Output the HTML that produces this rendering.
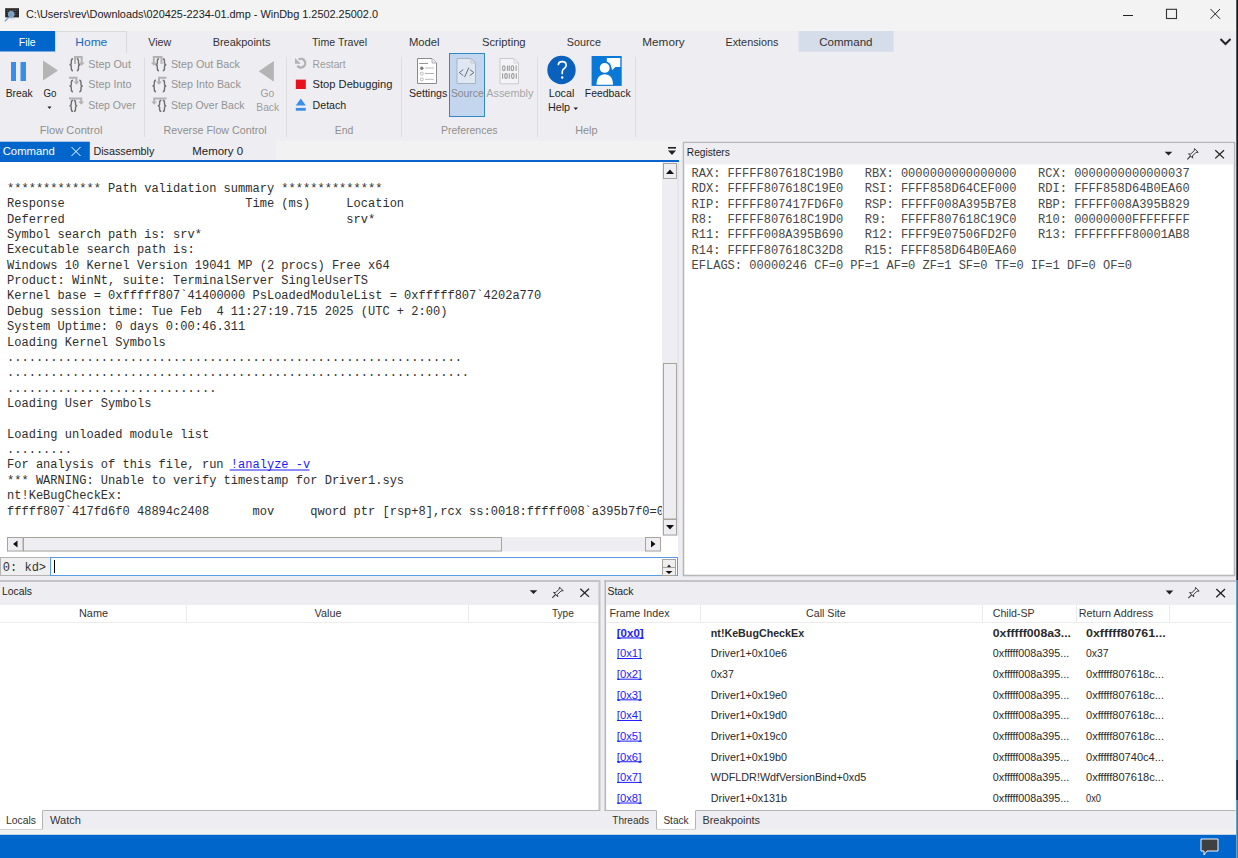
<!DOCTYPE html>
<html><head><meta charset="utf-8"><title>WinDbg</title>
<style>html,body{margin:0;padding:0;background:#eeeef2;overflow:hidden}svg{display:block}</style>
</head><body>
<svg width="1238" height="858" viewBox="0 0 1238 858">
<rect x="0" y="0" width="1238" height="858" fill="#eeeef2" />
<rect x="0" y="0" width="1238" height="31" fill="#f3f3f3" />
<rect x="5.2" y="8.2" width="13.8" height="9.2" fill="#262626" />
<line x1="7" y1="10.3" x2="17.5" y2="10.3" stroke="#8a8a8a" stroke-width="0.7" stroke-dasharray="1 0.6"/>
<line x1="7" y1="12.6" x2="17.5" y2="12.6" stroke="#6a6a6a" stroke-width="0.7" stroke-dasharray="1 0.6"/>
<line x1="12" y1="14.8" x2="17.5" y2="14.8" stroke="#6a6a6a" stroke-width="0.7" stroke-dasharray="1 0.6"/>
<circle cx="11.2" cy="14.3" r="3" fill="#9cc4ea" fill-opacity="0.75" stroke="#7fb0e0" stroke-width="0.8"/>
<line x1="9" y1="17.2" x2="4.8" y2="21.3" stroke="#7d9cc0" stroke-width="1.2" />
<line x1="9.5" y1="18.8" x2="15" y2="18.8" stroke="#c8d4e0" stroke-width="0.8" />
<text x="26" y="17.8" font-family="'Liberation Sans', sans-serif" font-size="11" fill="#1a1a1a" textLength="352" lengthAdjust="spacingAndGlyphs" >C:\Users\rev\Downloads\020425-2234-01.dmp - WinDbg 1.2502.25002.0</text>
<line x1="1123" y1="15.5" x2="1133" y2="15.5" stroke="#222" stroke-width="1" />
<rect x="1166.5" y="9.3" width="10" height="9.2" fill="none" stroke="#333" stroke-width="1.1" />
<line x1="1210.5" y1="9" x2="1220" y2="18.8" stroke="#222" stroke-width="1" />
<line x1="1220" y1="9" x2="1210.5" y2="18.8" stroke="#222" stroke-width="1" />
<rect x="0" y="31" width="55" height="20.5" fill="#0066cc" />
<text x="18.7" y="45.6" font-family="'Liberation Sans', sans-serif" font-size="11" fill="#ffffff" textLength="17" lengthAdjust="spacingAndGlyphs" >File</text>
<rect x="55.5" y="31.5" width="71" height="21" fill="#eeeef2" stroke="#dadade" stroke-width="1" />
<rect x="56" y="51" width="70" height="2" fill="#eeeef2" />
<text x="75.3" y="45.6" font-family="'Liberation Sans', sans-serif" font-size="11" fill="#1668c9" textLength="32" lengthAdjust="spacingAndGlyphs" >Home</text>
<text x="148.2" y="45.6" font-family="'Liberation Sans', sans-serif" font-size="11" fill="#333" textLength="23.100000000000023" lengthAdjust="spacingAndGlyphs" >View</text>
<text x="212.7" y="45.6" font-family="'Liberation Sans', sans-serif" font-size="11" fill="#333" textLength="57.69999999999999" lengthAdjust="spacingAndGlyphs" >Breakpoints</text>
<text x="312" y="45.6" font-family="'Liberation Sans', sans-serif" font-size="11" fill="#333" textLength="55" lengthAdjust="spacingAndGlyphs" >Time Travel</text>
<text x="408.9" y="45.6" font-family="'Liberation Sans', sans-serif" font-size="11" fill="#333" textLength="30.700000000000045" lengthAdjust="spacingAndGlyphs" >Model</text>
<text x="482" y="45.6" font-family="'Liberation Sans', sans-serif" font-size="11" fill="#333" textLength="43.60000000000002" lengthAdjust="spacingAndGlyphs" >Scripting</text>
<text x="566.8" y="45.6" font-family="'Liberation Sans', sans-serif" font-size="11" fill="#333" textLength="34.200000000000045" lengthAdjust="spacingAndGlyphs" >Source</text>
<text x="642.3" y="45.6" font-family="'Liberation Sans', sans-serif" font-size="11" fill="#333" textLength="42.40000000000009" lengthAdjust="spacingAndGlyphs" >Memory</text>
<text x="725.5" y="45.6" font-family="'Liberation Sans', sans-serif" font-size="11" fill="#333" textLength="52.89999999999998" lengthAdjust="spacingAndGlyphs" >Extensions</text>
<rect x="798.6" y="31" width="95" height="20.7" fill="#d5dcea" />
<text x="819.2" y="45.6" font-family="'Liberation Sans', sans-serif" font-size="11" fill="#333" textLength="53.3" lengthAdjust="spacingAndGlyphs" >Command</text>
<path d="M1220.5 39 L1225.5 44 L1230.5 39" fill="none" stroke="#222" stroke-width="2" />
<line x1="144.5" y1="57" x2="144.5" y2="137" stroke="#dddde2" stroke-width="1" />
<line x1="286.5" y1="57" x2="286.5" y2="137" stroke="#dddde2" stroke-width="1" />
<line x1="401.5" y1="57" x2="401.5" y2="137" stroke="#dddde2" stroke-width="1" />
<line x1="537.5" y1="57" x2="537.5" y2="137" stroke="#dddde2" stroke-width="1" />
<line x1="635.5" y1="57" x2="635.5" y2="137" stroke="#dddde2" stroke-width="1" />
<text x="39.7" y="133.6" font-family="'Liberation Sans', sans-serif" font-size="11" fill="#8e8e8e" textLength="62.7" lengthAdjust="spacingAndGlyphs" >Flow Control</text>
<text x="163.6" y="133.6" font-family="'Liberation Sans', sans-serif" font-size="11" fill="#8e8e8e" textLength="103.00000000000003" lengthAdjust="spacingAndGlyphs" >Reverse Flow Control</text>
<text x="334.8" y="133.6" font-family="'Liberation Sans', sans-serif" font-size="11" fill="#8e8e8e" textLength="18.5" lengthAdjust="spacingAndGlyphs" >End</text>
<text x="440.9" y="133.6" font-family="'Liberation Sans', sans-serif" font-size="11" fill="#8e8e8e" textLength="56.60000000000002" lengthAdjust="spacingAndGlyphs" >Preferences</text>
<text x="575.2" y="133.6" font-family="'Liberation Sans', sans-serif" font-size="11" fill="#8e8e8e" textLength="22.399999999999977" lengthAdjust="spacingAndGlyphs" >Help</text>
<rect x="11" y="62" width="5" height="19" fill="#3a8ee6" />
<rect x="20.5" y="62" width="5.5" height="19" fill="#3a8ee6" />
<text x="5.7" y="97.3" font-family="'Liberation Sans', sans-serif" font-size="11" fill="#1e1e1e" textLength="27" lengthAdjust="spacingAndGlyphs" >Break</text>
<path d="M43 60.5 L58 70.5 L43 80.5 Z" fill="#b4b4b4" />
<text x="43.4" y="97.3" font-family="'Liberation Sans', sans-serif" font-size="11" fill="#1e1e1e" textLength="13" lengthAdjust="spacingAndGlyphs" >Go</text>
<path d="M47.5 106.5 L51.5 106.5 L49.5 109 Z" fill="#222" />
<text x="88.2" y="67.6" font-family="'Liberation Sans', sans-serif" font-size="11" fill="#939393" textLength="42.7" lengthAdjust="spacingAndGlyphs" >Step Out</text>
<text x="88.2" y="87.6" font-family="'Liberation Sans', sans-serif" font-size="11" fill="#939393" textLength="43.3" lengthAdjust="spacingAndGlyphs" >Step Into</text>
<text x="88.2" y="108.6" font-family="'Liberation Sans', sans-serif" font-size="11" fill="#939393" textLength="47.499999999999986" lengthAdjust="spacingAndGlyphs" >Step Over</text>
<text x="170.9" y="67.6" font-family="'Liberation Sans', sans-serif" font-size="11" fill="#939393" textLength="69.1" lengthAdjust="spacingAndGlyphs" >Step Out Back</text>
<text x="170.9" y="87.6" font-family="'Liberation Sans', sans-serif" font-size="11" fill="#939393" textLength="69.9" lengthAdjust="spacingAndGlyphs" >Step Into Back</text>
<text x="170.9" y="108.6" font-family="'Liberation Sans', sans-serif" font-size="11" fill="#939393" textLength="73.5" lengthAdjust="spacingAndGlyphs" >Step Over Back</text>
<path d="M73.0 58.8 C71.3 58.8 71.3 59.8 71.3 61.3 L71.3 63.0 C71.3 64.3 70.5 64.8 69.5 64.8 C70.5 64.8 71.3 65.3 71.3 66.6 L71.3 68.3 C71.3 69.8 71.3 70.8 73.0 70.8" fill="none" stroke="#707070" stroke-width="1.4" />
<path d="M76.8 58.8 C78.5 58.8 78.5 59.8 78.5 61.3 L78.5 63.0 C78.5 64.3 79.3 64.8 80.3 64.8 C79.3 64.8 78.5 65.3 78.5 66.6 L78.5 68.3 C78.5 69.8 78.5 70.8 76.8 70.8" fill="none" stroke="#707070" stroke-width="1.4" />
<path d="M75 64 L75 57 L81.7 57 L81.7 63" fill="none" stroke="#b2b2b2" stroke-width="2" />
<path d="M78.7 62.5 L84.7 62.5 L81.7 65.7 Z" fill="#b2b2b2" />
<path d="M73.0 80.2 C71.3 80.2 71.3 81.2 71.3 82.7 L71.3 84.2 C71.3 85.5 70.5 86.0 69.5 86.0 C70.5 86.0 71.3 86.5 71.3 87.8 L71.3 89.3 C71.3 90.8 71.3 91.8 73.0 91.8" fill="none" stroke="#707070" stroke-width="1.4" />
<path d="M79.3 80.2 C81.0 80.2 81.0 81.2 81.0 82.7 L81.0 84.2 C81.0 85.5 81.8 86.0 82.8 86.0 C81.8 86.0 81.0 86.5 81.0 87.8 L81.0 89.3 C81.0 90.8 81.0 91.8 79.3 91.8" fill="none" stroke="#707070" stroke-width="1.4" />
<path d="M69 77.8 L76.5 77.8 L76.5 82" fill="none" stroke="#b2b2b2" stroke-width="2" />
<path d="M73.5 81.5 L79.5 81.5 L76.5 84.7 Z" fill="#b2b2b2" />
<path d="M73.0 100.3 C71.3 100.3 71.3 101.3 71.3 102.8 L71.3 104.05 C71.3 105.35 70.5 105.85 69.5 105.85 C70.5 105.85 71.3 106.35 71.3 107.64999999999999 L71.3 108.9 C71.3 110.4 71.3 111.4 73.0 111.4" fill="none" stroke="#707070" stroke-width="1.4" />
<path d="M73.8 100.3 C75.5 100.3 75.5 101.3 75.5 102.8 L75.5 104.05 C75.5 105.35 76.3 105.85 77.3 105.85 C76.3 105.85 75.5 106.35 75.5 107.64999999999999 L75.5 108.9 C75.5 110.4 75.5 111.4 73.8 111.4" fill="none" stroke="#707070" stroke-width="1.4" />
<path d="M69 98.4 L81.2 98.4 L81.2 102" fill="none" stroke="#b2b2b2" stroke-width="2" />
<path d="M78.2 101.5 L84.2 101.5 L81.2 104.7 Z" fill="#b2b2b2" />
<path d="M159.0 58.8 C157.3 58.8 157.3 59.8 157.3 61.3 L157.3 63.0 C157.3 64.3 156.5 64.8 155.5 64.8 C156.5 64.8 157.3 65.3 157.3 66.6 L157.3 68.3 C157.3 69.8 157.3 70.8 159.0 70.8" fill="none" stroke="#707070" stroke-width="1.4" />
<path d="M162.8 58.8 C164.5 58.8 164.5 59.8 164.5 61.3 L164.5 63.0 C164.5 64.3 165.3 64.8 166.3 64.8 C165.3 64.8 164.5 65.3 164.5 66.6 L164.5 68.3 C164.5 69.8 164.5 70.8 162.8 70.8" fill="none" stroke="#707070" stroke-width="1.4" />
<path d="M161.5 64 L161.5 57 L153.8 57 L153.8 63" fill="none" stroke="#b2b2b2" stroke-width="2" />
<path d="M150.8 62.5 L156.8 62.5 L153.8 65.7 Z" fill="#b2b2b2" />
<path d="M156.0 80.2 C154.3 80.2 154.3 81.2 154.3 82.7 L154.3 84.2 C154.3 85.5 153.5 86.0 152.5 86.0 C153.5 86.0 154.3 86.5 154.3 87.8 L154.3 89.3 C154.3 90.8 154.3 91.8 156.0 91.8" fill="none" stroke="#707070" stroke-width="1.4" />
<path d="M162.8 80.2 C164.5 80.2 164.5 81.2 164.5 82.7 L164.5 84.2 C164.5 85.5 165.3 86.0 166.3 86.0 C165.3 86.0 164.5 86.5 164.5 87.8 L164.5 89.3 C164.5 90.8 164.5 91.8 162.8 91.8" fill="none" stroke="#707070" stroke-width="1.4" />
<path d="M166.5 77.8 L159 77.8 L159 82" fill="none" stroke="#b2b2b2" stroke-width="2" />
<path d="M156 81.5 L162 81.5 L159 84.7 Z" fill="#b2b2b2" />
<path d="M161.3 100.3 C159.60000000000002 100.3 159.60000000000002 101.3 159.60000000000002 102.8 L159.60000000000002 104.05 C159.60000000000002 105.35 158.8 105.85 157.8 105.85 C158.8 105.85 159.60000000000002 106.35 159.60000000000002 107.64999999999999 L159.60000000000002 108.9 C159.60000000000002 110.4 159.60000000000002 111.4 161.3 111.4" fill="none" stroke="#707070" stroke-width="1.4" />
<path d="M162.8 100.3 C164.5 100.3 164.5 101.3 164.5 102.8 L164.5 104.05 C164.5 105.35 165.3 105.85 166.3 105.85 C165.3 105.85 164.5 106.35 164.5 107.64999999999999 L164.5 108.9 C164.5 110.4 164.5 111.4 162.8 111.4" fill="none" stroke="#707070" stroke-width="1.4" />
<path d="M166.5 98.4 L154.2 98.4 L154.2 102" fill="none" stroke="#b2b2b2" stroke-width="2" />
<path d="M151.2 101.5 L157.2 101.5 L154.2 104.7 Z" fill="#b2b2b2" />
<path d="M273.9 61 L258.7 71.3 L273.9 81.7 Z" fill="#b4b4b4" />
<text x="260.6" y="96.6" font-family="'Liberation Sans', sans-serif" font-size="11" fill="#9c9c9c" textLength="13.7" lengthAdjust="spacingAndGlyphs" >Go</text>
<text x="256.3" y="111.2" font-family="'Liberation Sans', sans-serif" font-size="11" fill="#9c9c9c" textLength="22.8" lengthAdjust="spacingAndGlyphs" >Back</text>
<path d="M298.6 59.4 A4.4 4.4 0 1 1 297.3 65.8" fill="none" stroke="#b2b2b2" stroke-width="2.3" />
<path d="M295 58 L295 63.8 L300.8 63.8 Z" fill="#b2b2b2" />
<text x="312.6" y="67.5" font-family="'Liberation Sans', sans-serif" font-size="11" fill="#9c9c9c" textLength="33" lengthAdjust="spacingAndGlyphs" >Restart</text>
<rect x="295.8" y="79.6" width="10" height="9.4" fill="#e8101a" />
<text x="312.6" y="87.8" font-family="'Liberation Sans', sans-serif" font-size="11" fill="#1e1e1e" textLength="79.9" lengthAdjust="spacingAndGlyphs" >Stop Debugging</text>
<path d="M300.8 98.6 L305.8 105.6 L295.8 105.6 Z" fill="#3a8ee6" />
<rect x="295.8" y="107.9" width="10" height="2.8" fill="#3a8ee6" />
<text x="312.6" y="108.6" font-family="'Liberation Sans', sans-serif" font-size="11" fill="#1e1e1e" textLength="33.6" lengthAdjust="spacingAndGlyphs" >Detach</text>
<rect x="449.5" y="53.5" width="35" height="63" fill="#c4d6ee" stroke="#2f89c5" stroke-width="1" />
<path d="M417.5 58.5 L432 58.5 L436.5 63 L436.5 83.5 L417.5 83.5 Z" fill="#ffffff" stroke="#8a8a8a" stroke-width="1" />
<path d="M432 58.5 L432 63 L436.5 63" fill="#eeeeee" stroke="#a0a0a0" stroke-width="0.8" />
<line x1="419.2" y1="63.5" x2="428" y2="63.5" stroke="#8a8a8a" stroke-width="0.9" />
<circle cx="421.8" cy="68.3" r="1.7" fill="#7a7a7a"/><circle cx="421.8" cy="73.6" r="1.5" fill="none" stroke="#b0b0b0" stroke-width="0.9"/><circle cx="421.8" cy="79.4" r="1.5" fill="none" stroke="#b0b0b0" stroke-width="0.9"/>
<line x1="425" y1="68" x2="434" y2="68" stroke="#c4c4c4" stroke-width="1.1" />
<line x1="425" y1="73.5" x2="434" y2="73.5" stroke="#a8a8a8" stroke-width="0.9" />
<line x1="425" y1="79.3" x2="434" y2="79.3" stroke="#b4b4b4" stroke-width="0.9" />
<text x="409" y="96.9" font-family="'Liberation Sans', sans-serif" font-size="11" fill="#1e1e1e" textLength="38.3" lengthAdjust="spacingAndGlyphs" >Settings</text>
<path d="M457 58.5 L471 58.5 L475.5 63 L475.5 83.5 L457 83.5 Z" fill="#dfe7f2" stroke="#aab3c0" stroke-width="1" />
<path d="M471 58.5 L471 63 L475.5 63" fill="none" stroke="#b8c0cc" stroke-width="0.8" />
<path d="M463.3 69.6 L459.3 72.6 L463.3 75.6 M468.8 67.6 L464.6 77.2 M469.8 69.6 L473.8 72.6 L469.8 75.6" fill="none" stroke="#66707e" stroke-width="1" />
<text x="450.9" y="96.9" font-family="'Liberation Sans', sans-serif" font-size="11" fill="#858a92" textLength="32.8" lengthAdjust="spacingAndGlyphs" >Source</text>
<path d="M500 58.5 L514 58.5 L518.5 63 L518.5 83.8 L500 83.8 Z" fill="#f4f4f6" stroke="#cacaca" stroke-width="1" />
<path d="M514 58.5 L514 63 L518.5 63" fill="none" stroke="#d0d0d0" stroke-width="0.8" />
<g fill="none" stroke="#9c9c9c" stroke-width="1.1"><ellipse cx="503.8" cy="68.2" rx="1.25" ry="2.4"/><ellipse cx="512.4" cy="68.2" rx="1.25" ry="2.4"/><ellipse cx="506" cy="76" rx="1.25" ry="2.4"/><ellipse cx="512.8" cy="76" rx="1.25" ry="2.4"/></g>
<line x1="507.5" y1="65.5" x2="507.5" y2="70.9" stroke="#9c9c9c" stroke-width="1.1" />
<line x1="509.3" y1="65.5" x2="509.3" y2="70.9" stroke="#9c9c9c" stroke-width="1.1" />
<line x1="516.1" y1="65.5" x2="516.1" y2="70.9" stroke="#9c9c9c" stroke-width="1.1" />
<line x1="502.6" y1="73.3" x2="502.6" y2="78.7" stroke="#9c9c9c" stroke-width="1.1" />
<line x1="509.3" y1="73.3" x2="509.3" y2="78.7" stroke="#9c9c9c" stroke-width="1.1" />
<line x1="516.3" y1="73.3" x2="516.3" y2="78.7" stroke="#9c9c9c" stroke-width="1.1" />
<text x="486.2" y="96.9" font-family="'Liberation Sans', sans-serif" font-size="11" fill="#a5a5a5" textLength="47.2" lengthAdjust="spacingAndGlyphs" >Assembly</text>
<circle cx="561.5" cy="70" r="14.2" fill="#0a60bd"/>
<path d="M558.3 65.2 C558.3 62.6 560 61.6 562.2 61.6 C564.6 61.6 566.2 63 566.2 65.2 C566.2 67.6 564 68.3 562.8 69.8 C562.2 70.6 562.2 71.5 562.2 74.2" fill="none" stroke="#ffffff" stroke-width="1.6" />
<circle cx="562.2" cy="77.5" r="1.2" fill="#fff"/>
<text x="548.7" y="96.9" font-family="'Liberation Sans', sans-serif" font-size="11" fill="#1e1e1e" textLength="25.6" lengthAdjust="spacingAndGlyphs" >Local</text>
<text x="547.9" y="111" font-family="'Liberation Sans', sans-serif" font-size="11" fill="#1e1e1e" textLength="22.2" lengthAdjust="spacingAndGlyphs" >Help</text>
<path d="M573.5 107.5 L578 107.5 L575.75 110 Z" fill="#222" />
<rect x="591.6" y="56" width="30.1" height="29.9" fill="#0a78d6" />
<path d="M606.8 58 L620.3 58 L620.3 66.9 L615.4 66.9 L612.2 70 L610 64 L606.8 62 Z" fill="#fff"/><circle cx="604.7" cy="67.9" r="6.6" fill="#0a78d6"/><circle cx="604.7" cy="67.9" r="4.95" fill="#fff"/><path d="M596.5 84.7 C596.5 77.5 600 74.2 604.75 74.2 C609.5 74.2 613 77.5 613 84.7 Z" fill="#fff"/>
<text x="584.8" y="96.9" font-family="'Liberation Sans', sans-serif" font-size="11" fill="#1e1e1e" textLength="45.8" lengthAdjust="spacingAndGlyphs" >Feedback</text>
<rect x="0" y="141" width="1238" height="19" fill="#f2f2f2" />
<rect x="0" y="141" width="276" height="19" fill="#eeeef2" />
<rect x="0" y="141.7" width="89.8" height="18.9" fill="#0066cc" />
<text x="2.7" y="154.6" font-family="'Liberation Sans', sans-serif" font-size="11" fill="#ffffff" textLength="52.2" lengthAdjust="spacingAndGlyphs" >Command</text>
<line x1="71.5" y1="147" x2="80.5" y2="156" stroke="#ffffff" stroke-width="1" />
<line x1="80.5" y1="147" x2="71.5" y2="156" stroke="#ffffff" stroke-width="1" />
<text x="93.4" y="155" font-family="'Liberation Sans', sans-serif" font-size="11" fill="#222" textLength="61" lengthAdjust="spacingAndGlyphs" >Disassembly</text>
<text x="192.3" y="155" font-family="'Liberation Sans', sans-serif" font-size="11" fill="#222" textLength="50.8" lengthAdjust="spacingAndGlyphs" >Memory 0</text>
<rect x="0" y="160" width="679" height="2" fill="#0a64d0" />
<rect x="668" y="147" width="8" height="1.6" fill="#222" />
<path d="M668 150.5 L676 150.5 L672 155 Z" fill="#222" />
<rect x="0" y="162" width="678" height="413.5" fill="#ffffff" />
<clipPath id="cmdclip"><rect x="0" y="162" width="662" height="374"/></clipPath>
<g clip-path="url(#cmdclip)">
<text x="7" y="191.83" font-family="'Liberation Mono', monospace" font-size="12" fill="#2e2e2e" textLength="375.44" lengthAdjust="spacingAndGlyphs" xml:space="preserve">************* Path validation summary **************</text>
<text x="7" y="207.2" font-family="'Liberation Mono', monospace" font-size="12" fill="#2e2e2e" textLength="397.1" lengthAdjust="spacingAndGlyphs" xml:space="preserve">Response                         Time (ms)     Location</text>
<text x="7" y="222.57" font-family="'Liberation Mono', monospace" font-size="12" fill="#2e2e2e" textLength="368.22" lengthAdjust="spacingAndGlyphs" xml:space="preserve">Deferred                                       srv*</text>
<text x="7" y="237.94" font-family="'Liberation Mono', monospace" font-size="12" fill="#2e2e2e" textLength="194.94" lengthAdjust="spacingAndGlyphs" xml:space="preserve">Symbol search path is: srv*</text>
<text x="7" y="253.31" font-family="'Liberation Mono', monospace" font-size="12" fill="#2e2e2e" textLength="194.94" lengthAdjust="spacingAndGlyphs" xml:space="preserve">Executable search path is: </text>
<text x="7" y="268.68" font-family="'Liberation Mono', monospace" font-size="12" fill="#2e2e2e" textLength="382.66" lengthAdjust="spacingAndGlyphs" xml:space="preserve">Windows 10 Kernel Version 19041 MP (2 procs) Free x64</text>
<text x="7" y="284.05" font-family="'Liberation Mono', monospace" font-size="12" fill="#2e2e2e" textLength="361.0" lengthAdjust="spacingAndGlyphs" xml:space="preserve">Product: WinNt, suite: TerminalServer SingleUserTS</text>
<text x="7" y="299.42" font-family="'Liberation Mono', monospace" font-size="12" fill="#2e2e2e" textLength="534.28" lengthAdjust="spacingAndGlyphs" xml:space="preserve">Kernel base = 0xfffff807`41400000 PsLoadedModuleList = 0xfffff807`4202a770</text>
<text x="7" y="314.79" font-family="'Liberation Mono', monospace" font-size="12" fill="#2e2e2e" textLength="440.42" lengthAdjust="spacingAndGlyphs" xml:space="preserve">Debug session time: Tue Feb  4 11:27:19.715 2025 (UTC + 2:00)</text>
<text x="7" y="330.16" font-family="'Liberation Mono', monospace" font-size="12" fill="#2e2e2e" textLength="238.26" lengthAdjust="spacingAndGlyphs" xml:space="preserve">System Uptime: 0 days 0:00:46.311</text>
<text x="7" y="345.53" font-family="'Liberation Mono', monospace" font-size="12" fill="#2e2e2e" textLength="158.84" lengthAdjust="spacingAndGlyphs" xml:space="preserve">Loading Kernel Symbols</text>
<text x="7" y="360.9" font-family="'Liberation Mono', monospace" font-size="12" fill="#2e2e2e" textLength="454.86" lengthAdjust="spacingAndGlyphs" xml:space="preserve">...............................................................</text>
<text x="7" y="376.27" font-family="'Liberation Mono', monospace" font-size="12" fill="#2e2e2e" textLength="462.08" lengthAdjust="spacingAndGlyphs" xml:space="preserve">................................................................</text>
<text x="7" y="391.64" font-family="'Liberation Mono', monospace" font-size="12" fill="#2e2e2e" textLength="209.38" lengthAdjust="spacingAndGlyphs" xml:space="preserve">.............................</text>
<text x="7" y="407.01" font-family="'Liberation Mono', monospace" font-size="12" fill="#2e2e2e" textLength="144.4" lengthAdjust="spacingAndGlyphs" xml:space="preserve">Loading User Symbols</text>
<text x="7" y="437.75" font-family="'Liberation Mono', monospace" font-size="12" fill="#2e2e2e" textLength="202.16" lengthAdjust="spacingAndGlyphs" xml:space="preserve">Loading unloaded module list</text>
<text x="7" y="453.12" font-family="'Liberation Mono', monospace" font-size="12" fill="#2e2e2e" textLength="64.98" lengthAdjust="spacingAndGlyphs" xml:space="preserve">.........</text>
<text x="7" y="468.49" font-family="'Liberation Mono', monospace" font-size="12" fill="#2e2e2e" textLength="223.82" lengthAdjust="spacingAndGlyphs" xml:space="preserve">For analysis of this file, run </text>
<text x="7" y="483.86" font-family="'Liberation Mono', monospace" font-size="12" fill="#2e2e2e" textLength="397.1" lengthAdjust="spacingAndGlyphs" xml:space="preserve">*** WARNING: Unable to verify timestamp for Driver1.sys</text>
<text x="7" y="499.23" font-family="'Liberation Mono', monospace" font-size="12" fill="#2e2e2e" textLength="115.52" lengthAdjust="spacingAndGlyphs" xml:space="preserve">nt!KeBugCheckEx:</text>
<text x="7" y="514.6" font-family="'Liberation Mono', monospace" font-size="12" fill="#2e2e2e" textLength="765.32" lengthAdjust="spacingAndGlyphs" xml:space="preserve">fffff807`417fd6f0 48894c2408      mov     qword ptr [rsp+8],rcx ss:0018:fffff008`a395b7f0=0000000000000000</text>
<text x="230.82" y="468.49" font-family="'Liberation Mono', monospace" font-size="12" fill="#1a1aff" textLength="79.42" lengthAdjust="spacingAndGlyphs" >!analyze -v</text>
<rect x="229.7" y="469.5" width="79.6" height="1" fill="#1a1aff" />
</g>
<rect x="662" y="162" width="15.7" height="374" fill="#eeeef2" />
<rect x="663.5" y="163.5" width="13" height="15" fill="#eeeef2" stroke="#a8a49c" stroke-width="1" />
<path d="M666 174 L674 174 L670 169.5 Z" fill="#111" />
<rect x="663.5" y="363.5" width="13" height="155.5" fill="#eeeef2" stroke="#a8a49c" stroke-width="1" />
<rect x="663.5" y="519.5" width="13" height="15.5" fill="#eeeef2" stroke="#a8a49c" stroke-width="1" />
<path d="M666 525 L674 525 L670 529.5 Z" fill="#111" />
<line x1="678" y1="162" x2="678" y2="536" stroke="#d6dbe6" stroke-width="1" />
<rect x="7" y="537" width="654" height="14.5" fill="#eeeef2" />
<rect x="7.5" y="537.5" width="15.5" height="13.5" fill="#eeeef2" stroke="#a8a49c" stroke-width="1" />
<path d="M17.5 540.5 L17.5 547.5 L13 544 Z" fill="#111" />
<rect x="23.5" y="537.5" width="478" height="13.5" fill="#eeeef2" stroke="#a8a49c" stroke-width="1" />
<rect x="645.5" y="537.5" width="15" height="13.5" fill="#eeeef2" stroke="#a8a49c" stroke-width="1" />
<path d="M651 540.5 L651 547.5 L655.5 544 Z" fill="#111" />
<rect x="0.5" y="557.5" width="50" height="18" fill="#efefef" stroke="#b4b4b4" stroke-width="1" />
<text x="2.8" y="571" font-family="'Liberation Mono', monospace" font-size="12" fill="#333" textLength="43.3" lengthAdjust="spacingAndGlyphs" xml:space="preserve">0: kd&gt;</text>
<rect x="50.5" y="557.5" width="627" height="18" fill="#ffffff" stroke="#5a9de6" stroke-width="1" />
<line x1="54.5" y1="560" x2="54.5" y2="573" stroke="#000" stroke-width="1" />
<rect x="662.5" y="559.5" width="13" height="16" fill="#efefef" stroke="#a8a49c" stroke-width="1" />
<path d="M667 567 L671 567 L669 564.5 Z" fill="#222" />
<line x1="663" y1="567.5" x2="675" y2="567.5" stroke="#a8a49c" stroke-width="1" />
<path d="M665.5 571 L672.5 571 L669 574 Z" fill="#111" />
<rect x="683.5" y="142.5" width="551" height="433" fill="#ffffff" stroke="#b8b8bc" stroke-width="1.6" />
<rect x="684.5" y="143.5" width="549" height="21" fill="#eeeef2" />
<text x="686.8" y="155.6" font-family="'Liberation Sans', sans-serif" font-size="11" fill="#1e1e1e" textLength="43" lengthAdjust="spacingAndGlyphs" >Registers</text>
<path d="M1164.7 151.7 L1172.3 151.7 L1168.5 155.6 Z" fill="#222" />
<path d="M1188.50 153.80 L1190.60 154.20 L1194.20 150.60 L1194.50 148.60 L1198.20 152.30 L1196.00 152.40 L1192.40 156.00 L1192.80 158.20 Z" fill="none" stroke="#3a3a3a" stroke-width="1" stroke-linejoin="round"/>
<line x1="1190.6000000000001" y1="156" x2="1187.3" y2="159.3" stroke="#3a3a3a" stroke-width="1.1" />
<line x1="1215.3" y1="150.2" x2="1224" y2="158.4" stroke="#222" stroke-width="1.3" />
<line x1="1224" y1="150.2" x2="1215.3" y2="158.4" stroke="#222" stroke-width="1.3" />
<text x="691.5" y="177.1" font-family="'Liberation Mono', monospace" font-size="12" fill="#474747" textLength="498.18" lengthAdjust="spacingAndGlyphs" xml:space="preserve">RAX: FFFFF807618C19B0   RBX: 0000000000000000   RCX: 0000000000000037</text>
<text x="691.5" y="192.38" font-family="'Liberation Mono', monospace" font-size="12" fill="#474747" textLength="498.18" lengthAdjust="spacingAndGlyphs" xml:space="preserve">RDX: FFFFF807618C19E0   RSI: FFFF858D64CEF000   RDI: FFFF858D64B0EA60</text>
<text x="691.5" y="207.66" font-family="'Liberation Mono', monospace" font-size="12" fill="#474747" textLength="498.18" lengthAdjust="spacingAndGlyphs" xml:space="preserve">RIP: FFFFF807417FD6F0   RSP: FFFFF008A395B7E8   RBP: FFFFF008A395B829</text>
<text x="691.5" y="222.94" font-family="'Liberation Mono', monospace" font-size="12" fill="#474747" textLength="498.18" lengthAdjust="spacingAndGlyphs" xml:space="preserve">R8:  FFFFF807618C19D0   R9:  FFFFF807618C19C0   R10: 00000000FFFFFFFF</text>
<text x="691.5" y="238.22" font-family="'Liberation Mono', monospace" font-size="12" fill="#474747" textLength="498.18" lengthAdjust="spacingAndGlyphs" xml:space="preserve">R11: FFFFF008A395B690   R12: FFFF9E07506FD2F0   R13: FFFFFFFF80001AB8</text>
<text x="691.5" y="253.5" font-family="'Liberation Mono', monospace" font-size="12" fill="#474747" textLength="324.9" lengthAdjust="spacingAndGlyphs" xml:space="preserve">R14: FFFFF807618C32D8   R15: FFFF858D64B0EA60</text>
<text x="691.5" y="268.78" font-family="'Liberation Mono', monospace" font-size="12" fill="#474747" textLength="440.42" lengthAdjust="spacingAndGlyphs" xml:space="preserve">EFLAGS: 00000246 CF=0 PF=1 AF=0 ZF=1 SF=0 TF=0 IF=1 DF=0 OF=0</text>
<rect x="0" y="580" width="600" height="2" fill="#c4c4c8" />
<rect x="0" y="582" width="598.5" height="23" fill="#eeeef2" />
<text x="2" y="595" font-family="'Liberation Sans', sans-serif" font-size="11" fill="#1e1e1e" textLength="30" lengthAdjust="spacingAndGlyphs" >Locals</text>
<path d="M529.7 590.2 L537.3 590.2 L533.5 594.1 Z" fill="#222" />
<path d="M553.50 592.30 L555.60 592.70 L559.20 589.10 L559.50 587.10 L563.20 590.80 L561.00 590.90 L557.40 594.50 L557.80 596.70 Z" fill="none" stroke="#3a3a3a" stroke-width="1" stroke-linejoin="round"/>
<line x1="555.6" y1="594.5" x2="552.3000000000001" y2="597.8" stroke="#3a3a3a" stroke-width="1.1" />
<line x1="580.3" y1="588.7" x2="589" y2="596.9" stroke="#222" stroke-width="1.3" />
<line x1="589" y1="588.7" x2="580.3" y2="596.9" stroke="#222" stroke-width="1.3" />
<rect x="0" y="605" width="598.5" height="205" fill="#ffffff" />
<line x1="0" y1="622.5" x2="598.5" y2="622.5" stroke="#ececec" stroke-width="1" />
<line x1="186.5" y1="605" x2="186.5" y2="622" stroke="#eaeaea" stroke-width="1" />
<line x1="468.5" y1="605" x2="468.5" y2="622" stroke="#eaeaea" stroke-width="1" />
<text x="79" y="617.3" font-family="'Liberation Sans', sans-serif" font-size="11" fill="#333" textLength="29" lengthAdjust="spacingAndGlyphs" >Name</text>
<text x="314.5" y="617.3" font-family="'Liberation Sans', sans-serif" font-size="11" fill="#333" textLength="27" lengthAdjust="spacingAndGlyphs" >Value</text>
<text x="552" y="617.3" font-family="'Liberation Sans', sans-serif" font-size="11" fill="#333" textLength="21.8" lengthAdjust="spacingAndGlyphs" >Type</text>
<rect x="598.5" y="580" width="2" height="231" fill="#c4c4c8" />
<rect x="0" y="809.5" width="42.5" height="20" fill="#ffffff" />
<path d="M0 829.5 L42.5 829.5 L42.5 811" fill="none" stroke="#b4b4b4" stroke-width="1" />
<line x1="42.5" y1="810.5" x2="600" y2="810.5" stroke="#b4b4b4" stroke-width="1" />
<text x="6" y="823.5" font-family="'Liberation Sans', sans-serif" font-size="11" fill="#333" textLength="30" lengthAdjust="spacingAndGlyphs" >Locals</text>
<text x="50" y="823.5" font-family="'Liberation Sans', sans-serif" font-size="11" fill="#333" textLength="31" lengthAdjust="spacingAndGlyphs" >Watch</text>
<rect x="604.5" y="580" width="631.5" height="2" fill="#c4c4c8" />
<rect x="604.5" y="580" width="1.5" height="231" fill="#b8b8bc" />
<rect x="606.5" y="582" width="629" height="23" fill="#eeeef2" />
<text x="607.4" y="595" font-family="'Liberation Sans', sans-serif" font-size="11" fill="#1e1e1e" textLength="26.2" lengthAdjust="spacingAndGlyphs" >Stack</text>
<path d="M1165.7 590.5 L1173.3 590.5 L1169.5 594.4 Z" fill="#222" />
<path d="M1189.50 592.60 L1191.60 593.00 L1195.20 589.40 L1195.50 587.40 L1199.20 591.10 L1197.00 591.20 L1193.40 594.80 L1193.80 597.00 Z" fill="none" stroke="#3a3a3a" stroke-width="1" stroke-linejoin="round"/>
<line x1="1191.6000000000001" y1="594.8" x2="1188.3" y2="598.0999999999999" stroke="#3a3a3a" stroke-width="1.1" />
<line x1="1216.3" y1="589.0" x2="1225" y2="597.1999999999999" stroke="#222" stroke-width="1.3" />
<line x1="1225" y1="589.0" x2="1216.3" y2="597.1999999999999" stroke="#222" stroke-width="1.3" />
<rect x="606.5" y="605" width="629" height="205" fill="#ffffff" />
<line x1="606.5" y1="622.5" x2="1232" y2="622.5" stroke="#ececec" stroke-width="1" />
<line x1="700.5" y1="605" x2="700.5" y2="622" stroke="#eaeaea" stroke-width="1" />
<line x1="982.5" y1="605" x2="982.5" y2="622" stroke="#eaeaea" stroke-width="1" />
<line x1="1076.5" y1="605" x2="1076.5" y2="622" stroke="#eaeaea" stroke-width="1" />
<line x1="1169.5" y1="605" x2="1169.5" y2="622" stroke="#eaeaea" stroke-width="1" />
<text x="609.4" y="617.3" font-family="'Liberation Sans', sans-serif" font-size="11" fill="#333" textLength="60.1" lengthAdjust="spacingAndGlyphs" >Frame Index</text>
<text x="806.1" y="617.3" font-family="'Liberation Sans', sans-serif" font-size="11" fill="#333" textLength="39.6" lengthAdjust="spacingAndGlyphs" >Call Site</text>
<text x="992.8" y="617.3" font-family="'Liberation Sans', sans-serif" font-size="11" fill="#333" textLength="41.9" lengthAdjust="spacingAndGlyphs" >Child-SP</text>
<text x="1078.7" y="617.3" font-family="'Liberation Sans', sans-serif" font-size="11" fill="#333" textLength="74.5" lengthAdjust="spacingAndGlyphs" >Return Address</text>
<text x="616.8" y="636.8" font-family="'Liberation Sans', sans-serif" font-size="11" fill="#1a1aff" textLength="26.8" lengthAdjust="spacingAndGlyphs" font-weight="bold" >[0x0]</text>
<rect x="617" y="637.4" width="26.8" height="1.1" fill="#1a1aff" />
<text x="710.8" y="636.8" font-family="'Liberation Sans', sans-serif" font-size="11" fill="#2a2a2a" textLength="93.3" lengthAdjust="spacingAndGlyphs" font-weight="bold" >nt!KeBugCheckEx</text>
<text x="992.8" y="636.8" font-family="'Liberation Sans', sans-serif" font-size="11" fill="#2a2a2a" textLength="78.2" lengthAdjust="spacingAndGlyphs" font-weight="bold" >0xfffff008a3...</text>
<text x="1086" y="636.8" font-family="'Liberation Sans', sans-serif" font-size="11" fill="#2a2a2a" textLength="79.6" lengthAdjust="spacingAndGlyphs" font-weight="bold" >0xfffff80761...</text>
<text x="616.8" y="657.44" font-family="'Liberation Sans', sans-serif" font-size="11" fill="#1a1aff" textLength="24.5" lengthAdjust="spacingAndGlyphs" >[0x1]</text>
<rect x="617" y="658.04" width="25" height="1" fill="#1a1aff" />
<text x="710.8" y="657.44" font-family="'Liberation Sans', sans-serif" font-size="11" fill="#2a2a2a" textLength="76.2" lengthAdjust="spacingAndGlyphs" >Driver1+0x10e6</text>
<text x="992.8" y="657.44" font-family="'Liberation Sans', sans-serif" font-size="11" fill="#2a2a2a" textLength="76.5" lengthAdjust="spacingAndGlyphs" >0xfffff008a395...</text>
<text x="1086" y="657.44" font-family="'Liberation Sans', sans-serif" font-size="11" fill="#2a2a2a" textLength="22.6" lengthAdjust="spacingAndGlyphs" >0x37</text>
<text x="616.8" y="678.08" font-family="'Liberation Sans', sans-serif" font-size="11" fill="#1a1aff" textLength="24.5" lengthAdjust="spacingAndGlyphs" >[0x2]</text>
<rect x="617" y="678.68" width="25" height="1" fill="#1a1aff" />
<text x="710.8" y="678.08" font-family="'Liberation Sans', sans-serif" font-size="11" fill="#2a2a2a" textLength="23" lengthAdjust="spacingAndGlyphs" >0x37</text>
<text x="992.8" y="678.08" font-family="'Liberation Sans', sans-serif" font-size="11" fill="#2a2a2a" textLength="76.5" lengthAdjust="spacingAndGlyphs" >0xfffff008a395...</text>
<text x="1086" y="678.08" font-family="'Liberation Sans', sans-serif" font-size="11" fill="#2a2a2a" textLength="78" lengthAdjust="spacingAndGlyphs" >0xfffff807618c...</text>
<text x="616.8" y="698.72" font-family="'Liberation Sans', sans-serif" font-size="11" fill="#1a1aff" textLength="24.5" lengthAdjust="spacingAndGlyphs" >[0x3]</text>
<rect x="617" y="699.32" width="25" height="1" fill="#1a1aff" />
<text x="710.8" y="698.72" font-family="'Liberation Sans', sans-serif" font-size="11" fill="#2a2a2a" textLength="76.2" lengthAdjust="spacingAndGlyphs" >Driver1+0x19e0</text>
<text x="992.8" y="698.72" font-family="'Liberation Sans', sans-serif" font-size="11" fill="#2a2a2a" textLength="76.5" lengthAdjust="spacingAndGlyphs" >0xfffff008a395...</text>
<text x="1086" y="698.72" font-family="'Liberation Sans', sans-serif" font-size="11" fill="#2a2a2a" textLength="78" lengthAdjust="spacingAndGlyphs" >0xfffff807618c...</text>
<text x="616.8" y="719.36" font-family="'Liberation Sans', sans-serif" font-size="11" fill="#1a1aff" textLength="24.5" lengthAdjust="spacingAndGlyphs" >[0x4]</text>
<rect x="617" y="719.96" width="25" height="1" fill="#1a1aff" />
<text x="710.8" y="719.36" font-family="'Liberation Sans', sans-serif" font-size="11" fill="#2a2a2a" textLength="76.2" lengthAdjust="spacingAndGlyphs" >Driver1+0x19d0</text>
<text x="992.8" y="719.36" font-family="'Liberation Sans', sans-serif" font-size="11" fill="#2a2a2a" textLength="76.5" lengthAdjust="spacingAndGlyphs" >0xfffff008a395...</text>
<text x="1086" y="719.36" font-family="'Liberation Sans', sans-serif" font-size="11" fill="#2a2a2a" textLength="78" lengthAdjust="spacingAndGlyphs" >0xfffff807618c...</text>
<text x="616.8" y="740.0" font-family="'Liberation Sans', sans-serif" font-size="11" fill="#1a1aff" textLength="24.5" lengthAdjust="spacingAndGlyphs" >[0x5]</text>
<rect x="617" y="740.6" width="25" height="1" fill="#1a1aff" />
<text x="710.8" y="740.0" font-family="'Liberation Sans', sans-serif" font-size="11" fill="#2a2a2a" textLength="76.2" lengthAdjust="spacingAndGlyphs" >Driver1+0x19c0</text>
<text x="992.8" y="740.0" font-family="'Liberation Sans', sans-serif" font-size="11" fill="#2a2a2a" textLength="76.5" lengthAdjust="spacingAndGlyphs" >0xfffff008a395...</text>
<text x="1086" y="740.0" font-family="'Liberation Sans', sans-serif" font-size="11" fill="#2a2a2a" textLength="78" lengthAdjust="spacingAndGlyphs" >0xfffff807618c...</text>
<text x="616.8" y="760.64" font-family="'Liberation Sans', sans-serif" font-size="11" fill="#1a1aff" textLength="24.5" lengthAdjust="spacingAndGlyphs" >[0x6]</text>
<rect x="617" y="761.24" width="25" height="1" fill="#1a1aff" />
<text x="710.8" y="760.64" font-family="'Liberation Sans', sans-serif" font-size="11" fill="#2a2a2a" textLength="76.2" lengthAdjust="spacingAndGlyphs" >Driver1+0x19b0</text>
<text x="992.8" y="760.64" font-family="'Liberation Sans', sans-serif" font-size="11" fill="#2a2a2a" textLength="76.5" lengthAdjust="spacingAndGlyphs" >0xfffff008a395...</text>
<text x="1086" y="760.64" font-family="'Liberation Sans', sans-serif" font-size="11" fill="#2a2a2a" textLength="78" lengthAdjust="spacingAndGlyphs" >0xfffff80740c4...</text>
<text x="616.8" y="781.28" font-family="'Liberation Sans', sans-serif" font-size="11" fill="#1a1aff" textLength="24.5" lengthAdjust="spacingAndGlyphs" >[0x7]</text>
<rect x="617" y="781.88" width="25" height="1" fill="#1a1aff" />
<text x="710.8" y="781.28" font-family="'Liberation Sans', sans-serif" font-size="11" fill="#2a2a2a" textLength="155.4" lengthAdjust="spacingAndGlyphs" >WDFLDR!WdfVersionBind+0xd5</text>
<text x="992.8" y="781.28" font-family="'Liberation Sans', sans-serif" font-size="11" fill="#2a2a2a" textLength="76.5" lengthAdjust="spacingAndGlyphs" >0xfffff008a395...</text>
<text x="1086" y="781.28" font-family="'Liberation Sans', sans-serif" font-size="11" fill="#2a2a2a" textLength="78" lengthAdjust="spacingAndGlyphs" >0xfffff807618c...</text>
<text x="616.8" y="801.92" font-family="'Liberation Sans', sans-serif" font-size="11" fill="#1a1aff" textLength="24.5" lengthAdjust="spacingAndGlyphs" >[0x8]</text>
<rect x="617" y="802.52" width="25" height="1" fill="#1a1aff" />
<text x="710.8" y="801.92" font-family="'Liberation Sans', sans-serif" font-size="11" fill="#2a2a2a" textLength="76.2" lengthAdjust="spacingAndGlyphs" >Driver1+0x131b</text>
<text x="992.8" y="801.92" font-family="'Liberation Sans', sans-serif" font-size="11" fill="#2a2a2a" textLength="76.5" lengthAdjust="spacingAndGlyphs" >0xfffff008a395...</text>
<text x="1086" y="801.92" font-family="'Liberation Sans', sans-serif" font-size="11" fill="#2a2a2a" textLength="15" lengthAdjust="spacingAndGlyphs" >0x0</text>
<line x1="604.5" y1="810.5" x2="656.5" y2="810.5" stroke="#b4b4b4" stroke-width="1" />
<line x1="695.5" y1="810.5" x2="1235.5" y2="810.5" stroke="#b4b4b4" stroke-width="1" />
<rect x="656.5" y="809.5" width="39" height="20" fill="#ffffff" />
<path d="M656.5 810.5 L656.5 829.5 L695.5 829.5 L695.5 810.5" fill="none" stroke="#b4b4b4" stroke-width="1" />
<text x="612.3" y="823.5" font-family="'Liberation Sans', sans-serif" font-size="11" fill="#333" textLength="36.8" lengthAdjust="spacingAndGlyphs" >Threads</text>
<text x="663.4" y="823.5" font-family="'Liberation Sans', sans-serif" font-size="11" fill="#333" textLength="25.2" lengthAdjust="spacingAndGlyphs" >Stack</text>
<text x="702.4" y="823.5" font-family="'Liberation Sans', sans-serif" font-size="11" fill="#333" textLength="57.7" lengthAdjust="spacingAndGlyphs" >Breakpoints</text>
<rect x="0" y="829.5" width="1236" height="5.3" fill="#f2f2f2" />
<rect x="0" y="834.8" width="1236" height="23.2" fill="#0066cc" />
<path d="M1201 839 L1218 839 L1218 851 L1207 851 L1204 855 L1204 851 L1201 851 Z" fill="#404040" stroke="#f4f4f4" stroke-width="1" />
<rect x="1236.3" y="0" width="1.7" height="580" fill="#121a20" />
<rect x="1236.3" y="580" width="1.7" height="278" fill="#3a7fa6" />
<rect x="1236.3" y="760" width="1.7" height="40" fill="#1e2d38" />
</svg>
</body></html>
